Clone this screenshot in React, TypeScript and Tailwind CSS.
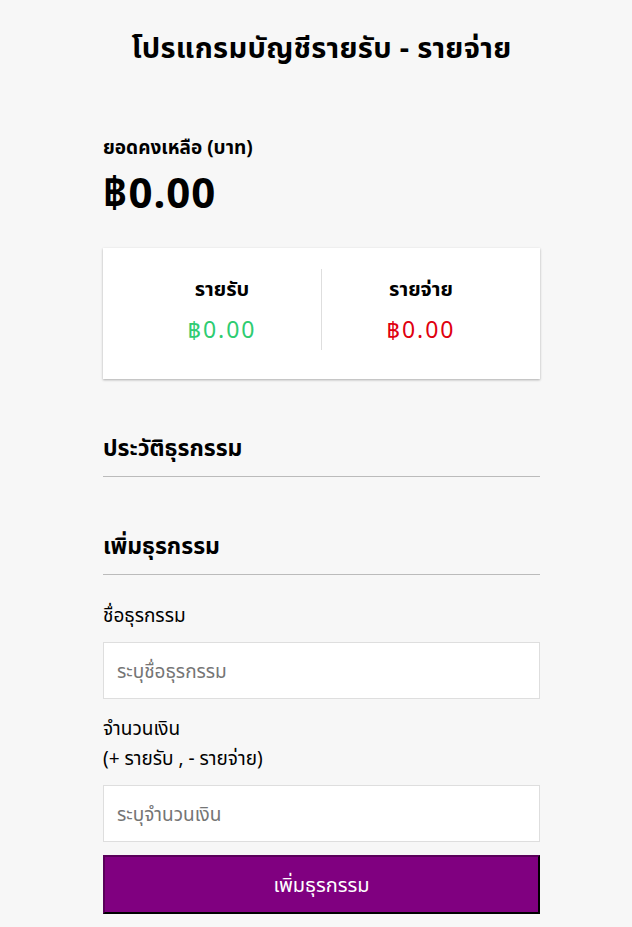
import { useState } from 'react';

const font = { fontFamily: '"Noto Sans", "Noto Sans Thai", "Liberation Sans", sans-serif' };

export default function App() {
  const [text, setText] = useState('');
  const [amount, setAmount] = useState('');

  return (
    <div className="min-h-[927px] bg-[#f7f7f7] text-black" style={font}>
      <h2 className="pl-[11px] pt-[26px] text-center text-[29px] font-bold leading-[42px] tracking-[0.3px]">
        โปรแกรมบัญชีรายรับ - รายจ่าย
      </h2>

      <div className="ml-[103px] w-[437px] pt-[66px]">
        <h4 className="text-[19px] font-bold leading-[26px]">ยอดคงเหลือ (บาท)</h4>
        <h1 className="mt-[7px] text-[42px] font-bold leading-[50px] tracking-[1px]">฿0.00</h1>

        <div className="mt-[31px] flex h-[131px] items-center justify-between bg-white px-5 pb-[8px] shadow-[0_1px_3px_rgba(0,0,0,0.12),0_1px_2px_rgba(0,0,0,0.2)]">
          <div className="flex-1 text-center">
            <h4 className="text-[20px] font-bold leading-[28px]">รายรับ</h4>
            <p className="mt-[10px] text-[23px] leading-[32px] tracking-[2px] text-[#2ecc71]">฿0.00</p>
          </div>
          <div className="h-[81px] w-px bg-[#dedede]" />
          <div className="flex-1 text-center">
            <h4 className="text-[20px] font-bold leading-[28px]">รายจ่าย</h4>
            <p className="mt-[10px] text-[23px] leading-[32px] tracking-[2px] text-[#e0000f]">฿0.00</p>
          </div>
        </div>

        <h3 className="mt-[52px] border-b border-[#bbb] pb-[13px] text-[23px] font-bold leading-[32px]">
          ประวัติธุรกรรม
        </h3>
        <ul />

        <h3 className="mt-[52px] border-b border-[#bbb] pb-[13px] text-[23px] font-bold leading-[32px]">
          เพิ่มธุรกรรม
        </h3>

        <form onSubmit={(e) => e.preventDefault()}>
          <div className="mt-[25px]">
            <label className="block text-[19px] leading-[30px]">ชื่อธุรกรรม</label>
            <input
              value={text}
              onChange={(e) => setText(e.target.value)}
              placeholder="ระบุชื่อธุรกรรม"
              className="mt-[12px] block h-[57px] w-full border border-[#dedede] bg-white px-[13px] text-[19px] outline-none placeholder:text-[#757575]"
            />
          </div>
          <div className="mt-[14px]">
            <label className="block text-[19px] leading-[30px]">
              จำนวนเงิน
              <br />
              (+ รายรับ , - รายจ่าย)
            </label>
            <input
              value={amount}
              onChange={(e) => setAmount(e.target.value)}
              placeholder="ระบุจำนวนเงิน"
              className="mt-[12px] block h-[57px] w-full border border-[#dedede] bg-white px-[13px] text-[19px] outline-none placeholder:text-[#757575]"
            />
          </div>
          <button className="mt-[13px] block h-[59px] w-full border-2 border-t-[#5a005a] border-l-[#5a005a] border-r-black border-b-black bg-[#800080] text-[20px] text-white">
            เพิ่มธุรกรรม
          </button>
        </form>
      </div>
    </div>
  );
}
